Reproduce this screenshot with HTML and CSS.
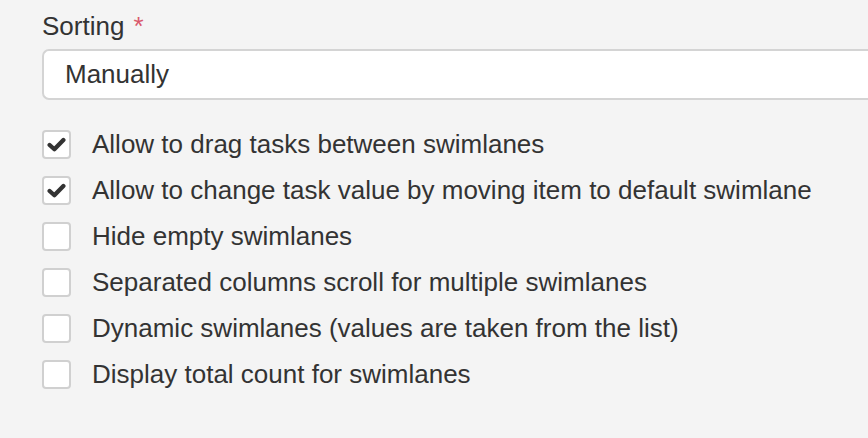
FILE: index.html
```html
<!DOCTYPE html>
<html lang="en">
<head>
    <meta charset="UTF-8">
    <title>Swimlanes</title>
    <link rel="stylesheet" href="styles.css">
</head>
<body>
    <div class="form">
        <div class="field">
            <label class="field-label">Sorting <span class="required">*</span></label>
            <div class="select">Manually</div>
        </div>

        <div class="options">
            <label class="option">
                <span class="box checked">
                    <svg viewBox="0 0 16 16" width="19" height="19"><path d="M2.2 8.4 L6.2 12 L13.8 4.2" fill="none" stroke="#333" stroke-width="3.6" stroke-linecap="round" stroke-linejoin="round"/></svg>
                </span>
                <span class="option-text">Allow to drag tasks between swimlanes</span>
            </label>
            <label class="option">
                <span class="box checked">
                    <svg viewBox="0 0 16 16" width="19" height="19"><path d="M2.2 8.4 L6.2 12 L13.8 4.2" fill="none" stroke="#333" stroke-width="3.6" stroke-linecap="round" stroke-linejoin="round"/></svg>
                </span>
                <span class="option-text">Allow to change task value by moving item to default swimlane</span>
            </label>
            <label class="option">
                <span class="box"></span>
                <span class="option-text">Hide empty swimlanes</span>
            </label>
            <label class="option">
                <span class="box"></span>
                <span class="option-text">Separated columns scroll for multiple swimlanes</span>
            </label>
            <label class="option">
                <span class="box"></span>
                <span class="option-text">Dynamic swimlanes (values are taken from the list)</span>
            </label>
            <label class="option">
                <span class="box"></span>
                <span class="option-text">Display total count for swimlanes</span>
            </label>
        </div>
    </div>
</body>
</html>
```

FILE: styles.css
```css
body {
    margin: 0;
    background-color: #f4f4f4;
    font-family: "Liberation Sans", Arial, sans-serif;
    color: #333;
    overflow: hidden;
}

.form {
    padding: 11px 0 0 42px;
}

.field-label {
    display: block;
    font-size: 26px;
    line-height: 30px;
    margin-bottom: 8px;
}

.required {
    color: #d9596c;
    margin-left: 2px;
}

/* select is cut off by the right edge of the panel */
.select {
    height: 47px;
    border: 2px solid #d4d4d4;
    border-right: none;
    border-radius: 7px 0 0 7px;
    background-color: #fff;
    font-size: 26px;
    line-height: 47px;
    padding-left: 21px;
}

.options {
    margin-top: 29px;
    display: flex;
    flex-direction: column;
    gap: 16px;
}

.option {
    display: flex;
    align-items: center;
    gap: 21px;
    font-size: 26px;
    line-height: 30px;
}

.box {
    width: 25px;
    height: 25px;
    border: 2px solid #d0d0d0;
    border-radius: 4px;
    background-color: #fff;
    display: flex;
    align-items: center;
    justify-content: center;
    flex-shrink: 0;
}
```
